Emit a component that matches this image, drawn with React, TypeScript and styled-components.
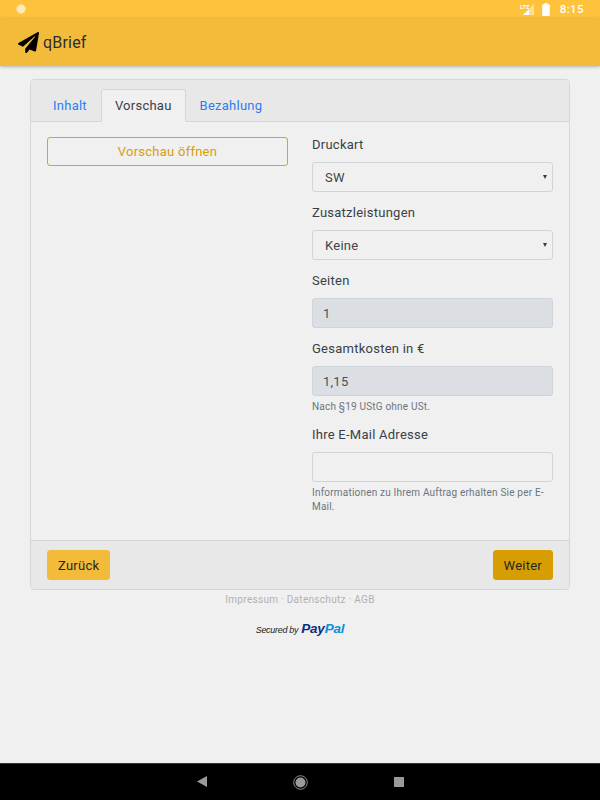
import * as React from "react";
import styled, { createGlobalStyle } from "styled-components";
import { FaPaperPlane } from "react-icons/fa";

const GlobalStyle = createGlobalStyle`
  html, body {
    margin: 0;
    padding: 0;
    background: #f0f0f0;
  }
  * {
    box-sizing: border-box;
  }
`;

const Screen = styled.div`
  display: flex;
  flex-direction: column;
  width: 600px;
  height: 800px;
  overflow: hidden;
  background: #f0f0f0;
  color: #212529;
  font-family: Roboto, "Liberation Sans", sans-serif;
  font-size: 13px;
  letter-spacing: 0.25px;
`;

const StatusBar = styled.div`
  display: flex;
  align-items: center;
  flex: 0 0 18px;
  padding: 0 16px;
  background: #ffc23c;
  color: #fff;
`;

const NotificationDot = styled.span`
  width: 10px;
  height: 10px;
  border-radius: 50%;
  background: #ffeab8;
  border: 1px solid #ffd88a;
`;

const StatusIcons = styled.div`
  display: flex;
  align-items: center;
  margin-left: auto;
  gap: 7px;
`;

const Clock = styled.span`
  margin-left: 3px;
  font-size: 11.5px;
  font-weight: 500;
  letter-spacing: 0.4px;
`;

const AppBar = styled.header`
  display: flex;
  align-items: center;
  flex: 0 0 48px;
  gap: 4px;
  padding: 0 18px 0 18px;
  background: #f2bb3a;
  box-shadow: 0 1px 3px rgba(0, 0, 0, 0.25);
  font-size: 16px;
  letter-spacing: 0.2px;
  color: #2a2f36;
  position: relative;
`;

const Main = styled.main`
  flex: 1;
  padding: 13px 30px 0;
`;

const Card = styled.section`
  display: flex;
  flex-direction: column;
  height: 511px;
  border: 1px solid #d6d6d6;
  border-radius: 4px;
`;

const Tabs = styled.nav`
  display: flex;
  align-items: flex-end;
  flex: 0 0 42px;
  padding: 0 8px;
  background: #e8e8e8;
  border-bottom: 1px solid #d6d6d6;
  border-radius: 3px 3px 0 0;
`;

const Tab = styled.a<{ $active?: boolean }>`
  height: ${p => (p.$active ? "33px" : "32px")};
  margin-bottom: ${p => (p.$active ? "-1px" : "0")};
  padding: 0 13px;
  line-height: 31px;
  color: ${p => (p.$active ? "#3a4047" : "#2f7bf0")};
  background: ${p => (p.$active ? "#f0f0f0" : "transparent")};
  border: 1px solid ${p => (p.$active ? "#d6d6d6" : "transparent")};
  border-bottom-color: ${p => (p.$active ? "#f0f0f0" : "transparent")};
  border-radius: 3px 3px 0 0;
`;

const Body = styled.div`
  flex: 1;
  display: grid;
  grid-template-columns: 241px 241px;
  column-gap: 24px;
  align-items: start;
  padding: 15px 16px 0;
`;

const PreviewButton = styled.button`
  width: 100%;
  height: 29px;
  padding: 0;
  font: inherit;
  letter-spacing: inherit;
  color: #d69e0a;
  background: transparent;
  border: 1px solid #dda21e;
  border-radius: 3px;
`;

const Fields = styled.div`
  display: flex;
  flex-direction: column;
`;

const Field = styled.div`
  display: flex;
  flex-direction: column;
  margin-bottom: 13px;
`;

const Label = styled.label`
  height: 16px;
  margin-bottom: 9px;
  line-height: 16px;
  color: #3a4047;
`;

const SelectWrap = styled.div`
  position: relative;
`;

const Select = styled.select`
  display: block;
  width: 100%;
  height: 30px;
  padding: 0 12px;
  font: inherit;
  letter-spacing: inherit;
  color: #3f464d;
  background: #f0f0f0;
  border: 1px solid #ced4da;
  border-radius: 3px;
  appearance: none;
`;

const Caret = styled.span`
  position: absolute;
  top: 13px;
  right: 6px;
  border-left: 2.5px solid transparent;
  border-right: 2.5px solid transparent;
  border-top: 4px solid #343a40;
`;

const Input = styled.input<{ $readOnlyLook?: boolean }>`
  display: block;
  width: 100%;
  height: 30px;
  padding: 0 10px;
  font: inherit;
  letter-spacing: inherit;
  color: #4a5157;
  background: ${p => (p.$readOnlyLook ? "#dbdfe3" : "#f0f0f0")};
  border: 1px solid #ced4da;
  border-radius: 3px;
`;

const Help = styled.small`
  display: block;
  margin-top: 4px;
  font-size: 10px;
  line-height: 14px;
  color: #6c757d;
  letter-spacing: 0.2px;
`;

const Footer = styled.footer`
  display: flex;
  justify-content: space-between;
  flex: 0 0 49px;
  padding: 9px 16px 0;
  background: #e8e8e8;
  border-top: 1px solid #d6d6d6;
  border-radius: 0 0 3px 3px;
`;

const ActionButton = styled.button<{ $dark?: boolean }>`
  height: 30px;
  padding: 0 10px;
  font: inherit;
  letter-spacing: inherit;
  color: #2a2620;
  background: ${p => (p.$dark ? "#d69e03" : "#f2bb3a")};
  border: 1px solid ${p => (p.$dark ? "#d69e03" : "#f2bb3a")};
  border-radius: 3px;
`;

const Legal = styled.div`
  margin-top: 4px;
  text-align: center;
  font-size: 10px;
  line-height: 12px;
  color: #b0b0b0;
  letter-spacing: 0.3px;
`;

const PayPalBadge = styled.div`
  display: flex;
  justify-content: center;
  align-items: baseline;
  gap: 3px;
  margin-top: 15px;
  font-family: "Liberation Sans", Arial, sans-serif;
  font-style: italic;
`;

const SecuredBy = styled.span`
  font-size: 9px;
  letter-spacing: -0.3px;
  color: #222;
`;

const PayPalWord = styled.span<{ $light?: boolean }>`
  font-size: 13.5px;
  font-weight: 700;
  letter-spacing: -0.2px;
  color: ${p => (p.$light ? "#0f8fd6" : "#0d2f80")};
`;

const NavBar = styled.div`
  display: flex;
  align-items: center;
  justify-content: center;
  flex: 0 0 37px;
  gap: 86px;
  padding-left: 0;
  background: #000;
  border-top: 1px solid #333;
`;

function StatusIconSet() {
  return (
    <StatusIcons>
      <svg width="15" height="13" viewBox="0 0 15 13">
        <path d="M14 1v11H3z" fill="#fff" opacity="0.45" />
        <path d="M9 6.5V12H3z" fill="#fff" />
        <text x="0" y="6" fontSize="5.5" fontWeight="700" fill="#fff" fontFamily="Roboto">LTE</text>
      </svg>
      <svg width="8" height="13" viewBox="0 0 8 13">
        <path d="M2.5 0h3v1.2H7a.8.8 0 0 1 .8.8v10.2a.8.8 0 0 1-.8.8H1a.8.8 0 0 1-.8-.8V2a.8.8 0 0 1 .8-.8h1.500z" fill="#fff" />
      </svg>
      <Clock>8:15</Clock>
    </StatusIcons>
  );
}

function NavIcons() {
  return (
    <NavBar>
      <svg width="10" height="12" viewBox="0 0 10 12">
        <path d="M10 0v11L0 5.500z" fill="#9a9a9a" />
      </svg>
      <svg width="15" height="15" viewBox="0 0 15 15">
        <circle cx="7.500" cy="7.500" r="6.800" fill="none" stroke="#9a9a9a" strokeWidth="0.9" />
        <circle cx="7.500" cy="7.500" r="5" fill="#9a9a9a" />
      </svg>
      <svg width="10" height="10" viewBox="0 0 10 10">
        <rect width="10" height="10" fill="#9a9a9a" />
      </svg>
    </NavBar>
  );
}

export default function App() {
  return (
    <Screen>
      <GlobalStyle />
      <StatusBar>
        <NotificationDot />
        <StatusIconSet />
      </StatusBar>
      <AppBar>
        <FaPaperPlane size={21} color="#000" />
        qBrief
      </AppBar>
      <Main>
        <Card>
          <Tabs>
            <Tab>Inhalt</Tab>
            <Tab $active>Vorschau</Tab>
            <Tab>Bezahlung</Tab>
          </Tabs>
          <Body>
            <PreviewButton>Vorschau öffnen</PreviewButton>
            <Fields>
              <Field>
                <Label>Druckart</Label>
                <SelectWrap>
                  <Select defaultValue="SW">
                    <option>SW</option>
                    <option>Farbe</option>
                  </Select>
                  <Caret />
                </SelectWrap>
              </Field>
              <Field>
                <Label>Zusatzleistungen</Label>
                <SelectWrap>
                  <Select defaultValue="Keine">
                    <option>Keine</option>
                  </Select>
                  <Caret />
                </SelectWrap>
              </Field>
              <Field>
                <Label>Seiten</Label>
                <Input $readOnlyLook readOnly value="1" />
              </Field>
              <Field>
                <Label>Gesamtkosten in €</Label>
                <Input $readOnlyLook readOnly value="1,15" />
                <Help>Nach §19 UStG ohne USt.</Help>
              </Field>
              <Field>
                <Label>Ihre E-Mail Adresse</Label>
                <Input />
                <Help>Informationen zu Ihrem Auftrag erhalten Sie per E-Mail.</Help>
              </Field>
            </Fields>
          </Body>
          <Footer>
            <ActionButton>Zurück</ActionButton>
            <ActionButton $dark>Weiter</ActionButton>
          </Footer>
        </Card>
        <Legal>Impressum · Datenschutz · AGB</Legal>
        <PayPalBadge>
          <SecuredBy>Secured by</SecuredBy>
          <span>
            <PayPalWord>Pay</PayPalWord>
            <PayPalWord $light>Pal</PayPalWord>
          </span>
        </PayPalBadge>
      </Main>
      <NavIcons />
    </Screen>
  );
}
